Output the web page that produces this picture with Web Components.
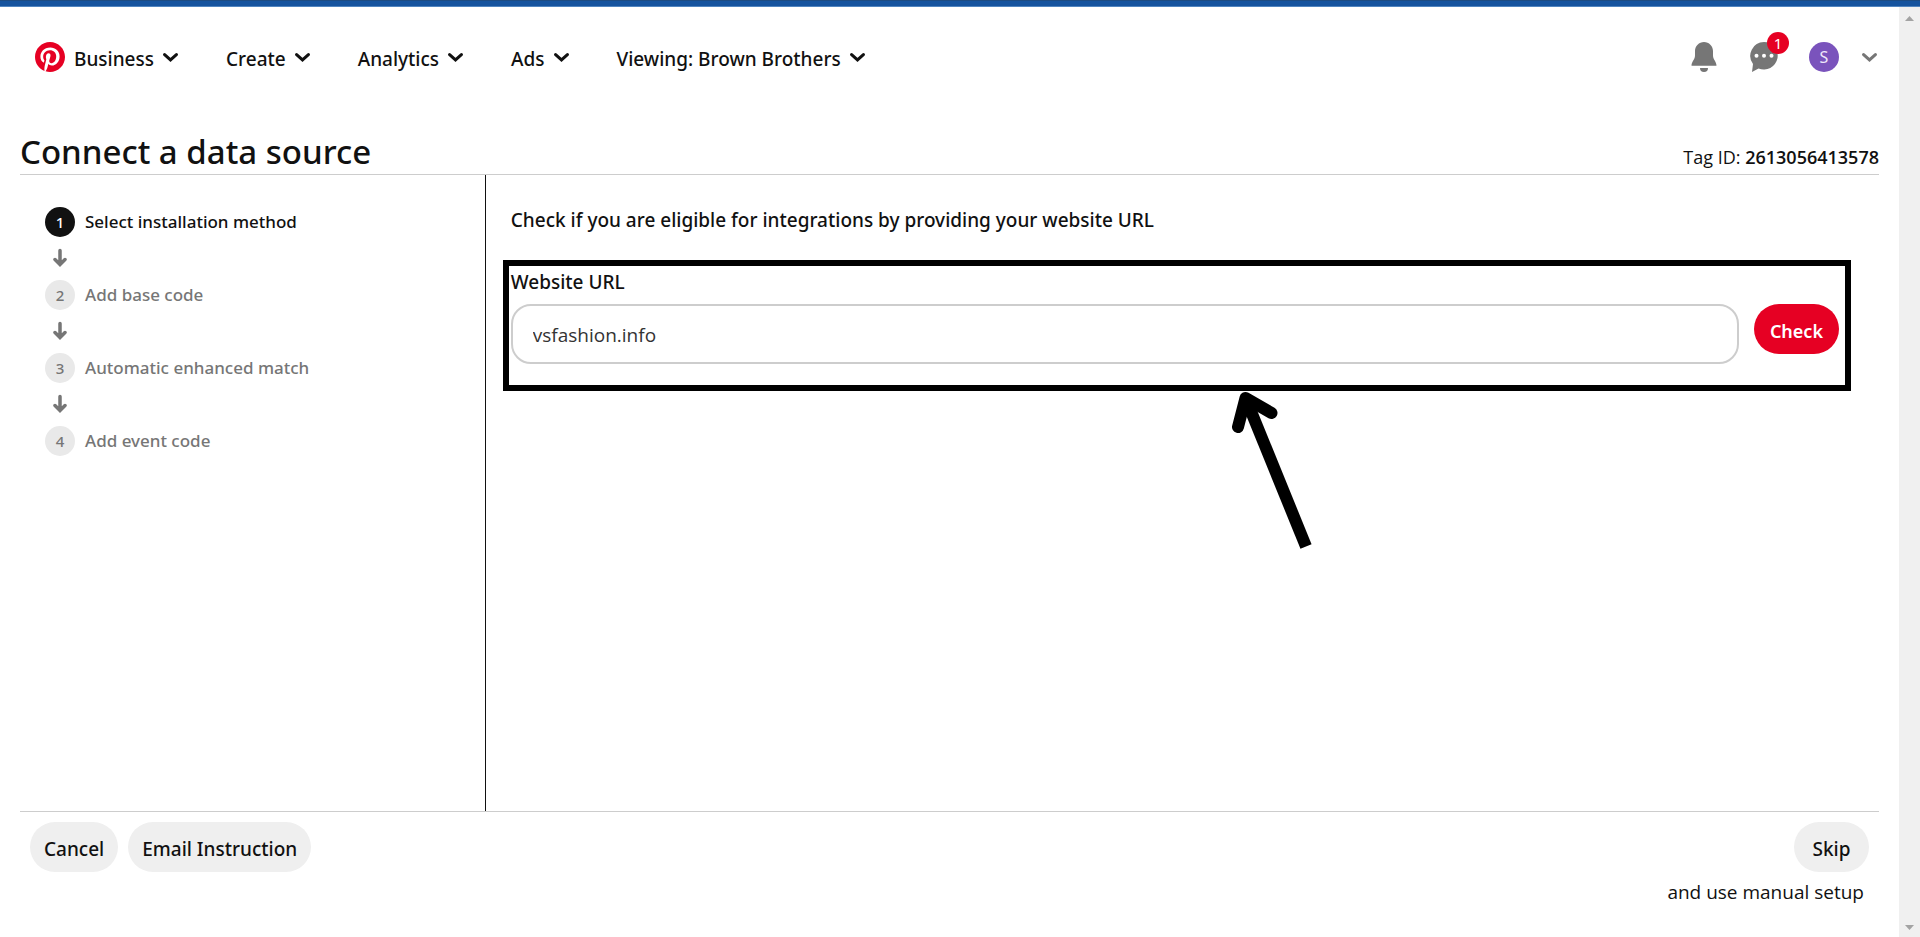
<!DOCTYPE html>
<html lang="en">
<head>
<meta charset="utf-8">
<meta name="viewport" content="width=device-width, initial-scale=1">
<title>Connect a data source</title>
<style>
  html, body { margin: 0; }
  body {
    --ink: #111;
    --muted: #767676;
    --rule: #cdcdcd;
    --red: #e60023;
    --fill: #efefef;
    --light-face: "Open Sans", "Noto Sans", sans-serif;
    font-family: "Noto Sans", "Open Sans", sans-serif;
    font-size: 19px;
    line-height: 28px;
    color: var(--ink);
    background: #fff;
  }
</style>
</head>
<body>
<setup-page></setup-page>

<template id="t-setup-page">
  <style>
    :host { display: flex; flex-direction: column; min-height: 100vh; }
    .strip { height: 5px; background: #15539e; border-top: 1px solid #1c4b82; border-bottom: 1px solid #5084bf; }
    .frame { flex: 1; display: flex; }
    .page { flex: 1; min-width: 0; display: flex; flex-direction: column; }
    .content { flex: 1; display: flex; flex-direction: column; margin: 0 20px; }
    .title { display: flex; justify-content: space-between; align-items: baseline; margin-top: 23px; border-bottom: 1px solid var(--rule); }
    h1 { margin: 0; font-size: 33px; line-height: 44px; font-weight: 500; }
    .tag { margin: 0; font-family: var(--light-face); font-size: 18px; }
    .tag strong { font-weight: 600; }
    .columns { flex: 1; display: grid; grid-template-columns: 25% minmax(0, 1fr); }
    aside { padding: 32px 25px; }
    main { border-left: 1px solid var(--ink); padding: 31px 28px 30px 17px; }
    footer { display: flex; justify-content: space-between; align-items: flex-start; border-top: 1px solid var(--rule); padding: 10px 10px 31px; }
    .left { display: flex; gap: 10px; }
    .right { display: flex; flex-direction: column; align-items: flex-end; gap: 6px; }
    .right p { margin: 0 5px 0 0; font-family: var(--light-face); }
  </style>
  <div class="strip"></div>
  <div class="frame">
    <div class="page">
      <app-header></app-header>
      <div class="content">
        <div class="title">
          <h1>Connect a data source</h1>
          <p class="tag">Tag ID: <strong>2613056413578</strong></p>
        </div>
        <div class="columns">
          <aside>
            <step-list>
              <step-item number="1" current>Select installation method</step-item>
              <step-item number="2">Add base code</step-item>
              <step-item number="3">Automatic enhanced match</step-item>
              <step-item number="4">Add event code</step-item>
            </step-list>
          </aside>
          <main><url-check></url-check></main>
        </div>
        <footer>
          <div class="left">
            <pill-button>Cancel</pill-button>
            <pill-button>Email Instruction</pill-button>
          </div>
          <div class="right">
            <pill-button>Skip</pill-button>
            <p>and use manual setup</p>
          </div>
        </footer>
      </div>
    </div>
    <scroll-track></scroll-track>
  </div>
</template>

<template id="t-app-header">
  <style>
    :host { display: flex; justify-content: space-between; align-items: center; height: 100px; padding: 0 22px 0 35px; }
    nav { display: flex; align-items: center; gap: 48px; }
    .home, .tools { display: flex; align-items: center; }
    .home { gap: 9px; }
    .tools { gap: 30px; }
    svg { display: block; }
    a { display: block; }
    button { display: block; position: relative; border: 0; padding: 0; margin: 0; background: none; color: var(--muted); font: inherit; }
    .badge { position: absolute; top: -10px; left: 18px; width: 22px; height: 22px; border-radius: 50%; background: var(--red); color: #fff; font-size: 15px; line-height: 22px; text-align: center; }
    .account { display: flex; align-items: center; gap: 23px; }
    .avatar { width: 30px; height: 30px; border-radius: 50%; background: #7a53bc; color: #efe8fa; font-size: 16px; line-height: 30px; text-align: center; }
  </style>
  <nav aria-label="Main">
    <div class="home">
      <a href="#" aria-label="Pinterest home">
        <svg width="30" height="30" viewBox="0 0 24 24"><circle cx="12" cy="12" r="11.5" fill="#fff"/><path fill="#e60023" d="M12 0C5.373 0 0 5.372 0 12c0 5.084 3.163 9.426 7.627 11.174-.105-.949-.2-2.405.042-3.441.218-.937 1.407-5.965 1.407-5.965s-.359-.719-.359-1.782c0-1.668.967-2.914 2.171-2.914 1.023 0 1.518.769 1.518 1.69 0 1.029-.655 2.568-.994 3.995-.283 1.194.599 2.169 1.777 2.169 2.133 0 3.772-2.249 3.772-5.495 0-2.873-2.064-4.882-5.012-4.882-3.414 0-5.418 2.561-5.418 5.207 0 1.031.397 2.138.893 2.738a.36.36 0 0 1 .083.345l-.333 1.36c-.053.22-.174.267-.402.161-1.499-.698-2.436-2.889-2.436-4.649 0-3.785 2.75-7.262 7.929-7.262 4.163 0 7.398 2.967 7.398 6.931 0 4.136-2.607 7.464-6.227 7.464-1.216 0-2.359-.631-2.75-1.378l-.748 2.853c-.271 1.043-1.002 2.35-1.492 3.146C9.57 23.812 10.763 24 12 24c6.627 0 12-5.373 12-12 0-6.628-5.373-12-12-12"/></svg>
      </a>
      <nav-menu>Business</nav-menu>
    </div>
    <nav-menu>Create</nav-menu>
    <nav-menu>Analytics</nav-menu>
    <nav-menu>Ads</nav-menu>
    <nav-menu>Viewing: Brown Brothers</nav-menu>
  </nav>
  <div class="tools">
    <button type="button" aria-label="Notifications">
      <svg width="30" height="30" viewBox="0 0 30 30" fill="currentColor"><path d="M15 0C10 0 6 4 6 9v4.500c0 4.200-3.500 6-3.500 10.200h25c0-4.200-3.500-6-3.500-10.200V9c0-5-4-9-9-9z"/><path d="M11 26h8a4 4 0 0 1-8 0z"/></svg>
    </button>
    <button type="button" aria-label="Messages">
      <svg width="30" height="30" viewBox="0 0 30 30"><path fill="currentColor" d="M15 0a13.800 13.800 0 1 1-5.500 26.500L3 30l1-8A13.800 13.800 0 0 1 15 0z"/><g fill="#fff"><circle cx="7.500" cy="13.800" r="2"/><circle cx="15" cy="13.800" r="2"/><circle cx="22.500" cy="13.800" r="2"/></g></svg>
      <span class="badge">1</span>
    </button>
    <button type="button" class="account" aria-label="Account">
      <span class="avatar">S</span>
      <svg width="15" height="9" viewBox="0 0 15 9" fill="none" stroke="currentColor" stroke-width="3" stroke-linecap="round"><path d="M1.600 1.600l5.900 5.300 5.900-5.300"/></svg>
    </button>
  </div>
</template>

<template id="t-nav-menu">
  <style>
    :host { display: block; }
    button { display: flex; align-items: center; gap: 9px; margin: 0; border: 0; padding: 0; background: none; color: inherit; font: inherit; font-weight: 500; white-space: nowrap; }
    span { padding-top: 3px; }
    svg { display: block; }
  </style>
  <button type="button" aria-haspopup="true"><span><slot></slot></span>
    <svg width="15" height="9" viewBox="0 0 15 9" fill="none" stroke="currentColor" stroke-width="3" stroke-linecap="round"><path d="M1.600 1.600l5.900 5.300 5.900-5.300"/></svg>
  </button>
</template>

<template id="t-step-list">
  <style>
    :host { display: flex; flex-direction: column; gap: 43px; }
  </style>
  <slot></slot>
</template>

<template id="t-step-item">
  <style>
    :host { display: flex; align-items: center; gap: 10px; position: relative; height: 30px; color: var(--muted); font-size: 17px; font-weight: 500; line-height: 30px; }
    .num { width: 30px; height: 30px; border-radius: 50%; background: #e9e9e9; font-size: 15px; text-align: center; }
    svg { position: absolute; left: 8px; top: 41px; }
    :host([current]) { color: var(--ink); }
    :host([current]) .num { background: var(--ink); color: #fff; }
    :host(:last-of-type) svg { display: none; }
  </style>
  <span class="num"></span>
  <span class="text"><slot></slot></span>
  <svg width="14" height="19" viewBox="0 0 14 19" fill="none" stroke="#767676" stroke-width="3.500" stroke-linecap="round"><path d="M7 2.500v13.500M2 11.500l5 5 5-5"/></svg>
</template>

<template id="t-pill-button">
  <style>
    :host { display: block; }
    button { display: block; min-width: 75px; height: 50px; margin: 0; border: 0; border-radius: 25px; padding: 3px 14px 0; background: var(--fill); color: var(--ink); font: inherit; font-weight: 500; white-space: nowrap; }
    :host([primary]) button { padding: 3px 16px 0; background: var(--red); color: #fff; font-size: 18px; font-weight: 600; }
  </style>
  <button type="button"><slot></slot></button>
</template>

<template id="t-url-check">
  <style>
    :host { display: block; }
    h2 { margin: 0 8px 26px; font-size: 19px; line-height: 28px; font-weight: 500; }
    .box { position: relative; border: 6px solid #000; padding: 1px 6px 21px 2px; }
    label { display: block; margin-bottom: 7px; line-height: 30px; font-weight: 500; }
    .row { display: flex; align-items: flex-start; gap: 15px; }
    input { flex: 1; min-width: 0; box-sizing: border-box; height: 60px; margin: 0; border: 2px solid var(--rule); border-radius: 20px; padding: 2px 20px 0; background: #fff; color: #333; font: inherit; font-family: var(--light-face); outline: 0; }
    .pointer { position: absolute; left: 54%; top: calc(100% + 6px); }
  </style>
  <h2>Check if you are eligible for integrations by providing your website URL</h2>
  <div class="box">
    <label for="url">Website URL</label>
    <div class="row">
      <input id="url" type="text" value="vsfashion.info">
      <pill-button primary>Check</pill-button>
    </div>
    <svg class="pointer" width="84" height="160" viewBox="0 0 84 160" fill="none" stroke="#000" stroke-width="12" stroke-linejoin="round" aria-hidden="true"><path d="M16 8l60 147.500"/><path stroke-linecap="round" d="M8 36L15.500 7l26 15"/></svg>
  </div>
</template>

<template id="t-scroll-track">
  <style>
    :host { display: flex; flex-direction: column; justify-content: space-between; align-items: center; box-sizing: border-box; width: 21px; padding: 9px 0 7px; background: #f0f0f0; }
    svg { display: block; }
  </style>
  <svg width="9" height="5" viewBox="0 0 9 5" fill="#a3a3a3"><path d="M0 5L4.500 0 9 5z"/></svg>
  <svg width="9" height="5" viewBox="0 0 9 5" fill="#a3a3a3"><path d="M0 0l4.500 5L9 0z"/></svg>
</template>

<script>
  class TemplateElement extends HTMLElement {
    constructor() {
      super();
      const template = document.getElementById('t-' + this.localName);
      this.attachShadow({ mode: 'open' }).append(template.content.cloneNode(true));
    }
  }

  class StepItem extends TemplateElement {
    connectedCallback() {
      this.shadowRoot.querySelector('.num').textContent = this.getAttribute('number');
    }
  }

  customElements.define('step-item', StepItem);
  for (const name of ['nav-menu', 'pill-button', 'step-list', 'url-check', 'scroll-track', 'app-header', 'setup-page']) {
    customElements.define(name, class extends TemplateElement {});
  }
</script>
</body>
</html>
